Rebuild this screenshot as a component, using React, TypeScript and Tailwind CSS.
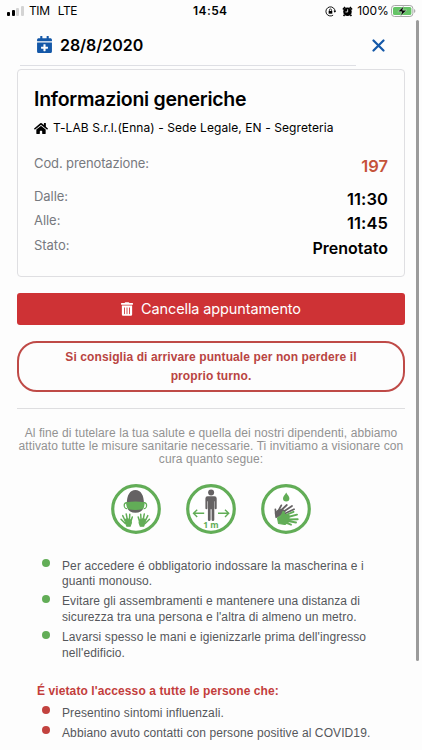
import { FaCalendarPlus, FaHome, FaTrashAlt } from "react-icons/fa";

const details = [
  { label: "Dalle:", value: "11:30", valueClass: "text-[16.5px] tracking-[0.1px]" },
  { label: "Alle:", value: "11:45", valueClass: "text-[16.5px] tracking-[0.1px]" },
  { label: "Stato:", value: "Prenotato", valueClass: "text-[16px]" },
];

const rules = [
  ["Per accedere é obbligatorio indossare la mascherina e i", "guanti monouso."],
  ["Evitare gli assembramenti e mantenere una distanza di", "sicurezza tra una persona e l'altra di almeno un metro."],
  ["Lavarsi spesso le mani e igienizzarle prima dell'ingresso", "nell'edificio."],
];

const forbidden = [
  "Presentino sintomi influenzali.",
  "Abbiano avuto contatti con persone positive al COVID19.",
];

const StatusBar = () => (
  <div className="flex h-[22px] shrink-0 items-center whitespace-nowrap pl-[7px] pr-[6px] text-black">
    <div className="flex h-[10px] w-[18px] items-end gap-[1.5px]">
      <span className="h-[4px] w-[3px] rounded-[1px] bg-black" />
      <span className="h-[6px] w-[3px] rounded-[1px] bg-black" />
      <span className="h-[8px] w-[3px] rounded-[1px] bg-[#d4d4d4]" />
      <span className="h-[10px] w-[3px] rounded-[1px] bg-[#d4d4d4]" />
    </div>
    <span className="ml-[4px] w-[29px] text-[12px] tracking-[-0.3px]">TIM</span>
    <span className="w-[136px] text-[12px] tracking-[-0.5px]">LTE</span>
    <span className="w-[132px] text-[12px] font-semibold tracking-[0.4px]">14:54</span>
    <svg className="ml-[1px] h-[11px] w-[11px]" viewBox="0 0 12 12" fill="none" stroke="#000" strokeWidth="1">
      <path d="M8.9 10A5 5 0 1 1 11 6.2" />
      <path d="M9.3 5.2h3L10.8 7.5z" fill="#000" stroke="none" />
      <rect x="4" y="5.4" width="4" height="3" fill="#000" stroke="none" />
      <path d="M4.8 5.7V4.4a1.2 1.2 0 0 1 2.4 0v1.3" strokeWidth=".8" />
    </svg>
    <svg className="ml-[6px] h-[11px] w-[11px]" viewBox="0 0 12 12">
      <path d="M1 3.7 3.4 1M8.6 1 11 3.7M2.8 9.5 1.7 11M9.2 9.5l1.1 1.5" stroke="#000" strokeWidth="1.7" />
      <circle cx="6" cy="6.3" r="4.7" />
      <path d="M6.2 3.6v2.9H3.8" fill="none" stroke="#fff" strokeWidth=".9" />
    </svg>
    <span className="ml-[4px] w-[34px] text-[12px] tracking-[-0.1px]">100%</span>
    <svg className="h-[12px] w-[25px]" viewBox="0 0 25 12">
      <rect x=".5" y=".5" width="21.5" height="11" rx="3" fill="#fff" stroke="#a5a5a5" />
      <rect x="2" y="2" width="18.5" height="8" rx="1.6" fill="#65c466" />
      <path d="M23.2 4v4q1.3-.6 1.3-2t-1.3-2z" fill="#aaa" />
      <path d="M12.8 1 6.9 6.7h3.9L9.6 11l6.1-5.8h-4z" fill="#000" stroke="#e5f6e5" strokeWidth=".5" />
    </svg>
  </div>
);

const OpenHand = () => (
  <g fill="none" stroke="#62ad57" strokeLinecap="round" strokeLinejoin="round">
    <path d="M13.8 36 11.7 31.6M16.2 35 15.2 29.9M18.5 35 18.8 30.2M20.1 36.8 21.3 33" strokeWidth="1.5" />
    <path d="M13.6 35.6 16.5 34.8 20 36 20.4 38.8 19.2 42.2H15.7z" fill="#62ad57" strokeWidth="1.1" />
    <path d="M14.3 39.5 10 35.2" strokeWidth="1.5" />
  </g>
);

const Ring = () => <circle cx="25" cy="25" r="23.3" fill="#fff" stroke="#62ad57" strokeWidth="3.2" />;

const MaskIcon = () => (
  <svg className="h-[50px] w-[50px]" viewBox="0 0 50 50">
    <Ring />
    <path d="M15.8 20C15.8 11 19 6 24.4 6S33 11 33 20q0 8.8-8.6 8.8-8.6 0-8.6-8.8z" fill="#656263" />
    <path d="M16.5 18.7h-1.2a2.6 3 0 0 0 1 5.9M32.3 18.7h1.2a2.6 3 0 0 1-1 5.9" fill="none" stroke="#62ad57" strokeWidth="1.2" />
    <path d="M15.4 18.2q9-1.2 18 0 .9 4.2-2 7.1-7 1.6-14 0-2.9-2.9-2-7.1z" fill="#62ad57" />
    <OpenHand />
    <g transform="matrix(-1 0 0 1 48.5 0)">
      <OpenHand />
    </g>
  </svg>
);

const DistanceIcon = () => (
  <svg className="h-[50px] w-[50px]" viewBox="0 0 50 50">
    <Ring />
    <circle cx="25.1" cy="8.5" r="3" fill="#656263" />
    <path
      d="M21.8 12.3h6.6a2.3 2.3 0 0 1 2.3 2.3v9.6a1 1 0 0 1-2 0v-7h-.4v18.5a1.2 1.2 0 0 1-2.7 0V25.3h-1v10.4a1.2 1.2 0 0 1-2.7 0V17.2h-.5v7a1 1 0 0 1-2 0v-9.6a2.3 2.3 0 0 1 2.4-2.3z"
      fill="#656263"
    />
    <path d="M18.2 29.3H7.5M11.2 25.7l-3.7 3.6 3.7 3.6M32 29.3h10.5M39 25.7l3.7 3.6-3.7 3.6" fill="none" stroke="#62ad57" strokeWidth="1.4" />
    <text x="25" y="44" textAnchor="middle" fill="#62ad57" className="font-['Open_Sans'] text-[8.5px] font-bold">
      1 m
    </text>
  </svg>
);

const WashIcon = () => (
  <svg className="h-[50px] w-[50px]" viewBox="0 0 50 50">
    <Ring />
    <path d="M25.2 8.5c1.2 2.4 3.2 3.8 3.2 5.8a3.2 3.2 0 0 1-6.4 0c0-2 2-3.4 3.2-5.8z" fill="#62ad57" />
    <g fill="none" stroke="#656263" strokeLinecap="round" strokeLinejoin="round">
      <path d="M17 27.5 20.3 21.4M20 26.5 25.8 21M22 28l9-6M24 29.5l9-4.2M14.8 29l-.4-3.5" strokeWidth="1.8" />
      <path d="M14.3 29 17 26.5l4-1.2 3 2-3.5 3.5-5.5 2.7z" fill="#656263" strokeWidth="1.2" />
    </g>
    <g fill="none" stroke="#62ad57" strokeLinecap="round" strokeLinejoin="round">
      <path d="M25 31 32.5 27.8M27 33l9-2.4M27 35.5l9.7-.2M27 37l8 1.5M24 38.3l6 2.4" strokeWidth="1.9" />
      <path d="M16.5 34q4.4-2 5.6-6.8 1.8.4 1.1 3.2l4.8.6v6.5L24 40.5 17.5 39.5z" fill="#62ad57" strokeWidth="1.1" />
    </g>
  </svg>
);

const App = () => {
  return (
    <div className="relative flex h-[750px] w-[422px] flex-col overflow-hidden bg-[#fdfdfd] font-['Inter',sans-serif]">
      <StatusBar />

      <header className="flex h-[43px] shrink-0 items-center justify-between pl-[37px] pr-[37px] pt-[2px]">
        <div className="flex items-center gap-[8px]">
          <FaCalendarPlus className="h-[17px] w-[15px] text-[#1458a8]" />
          <span className="h-[20px] whitespace-nowrap text-[16px] font-semibold leading-[20px] tracking-[-0.05px] text-black">28/8/2020</span>
        </div>
        <svg className="mt-[2px] h-[13px] w-[13px]" viewBox="0 0 13 13" stroke="#1458a8" strokeWidth="2.2" strokeLinecap="round">
          <path d="M1.5 1.5l10 10M11.5 1.5l-10 10" />
        </svg>
      </header>
      <div className="ml-[20px] h-px w-[336px] shrink-0 bg-[#dedfe4]" />

      <main className="ml-[17px] mt-[3px] flex w-[388px] flex-col">
        <section className="h-[208px] rounded-[4px] border border-[#dfdfe2] px-[16px] pt-[15px] text-black">
          <h1 className="h-[28px] whitespace-nowrap text-[19.5px] font-semibold leading-[28px] tracking-[-0.26px]">Informazioni generiche</h1>
          <div className="mt-[5px] flex h-[20px] items-center gap-[5px]">
            <FaHome className="h-[13px] w-[14px]" />
            <span className="whitespace-nowrap text-[12px] tracking-[0.08px]">T-LAB S.r.l.(Enna) - Sede Legale, EN - Segreteria</span>
          </div>
          <div className="mt-[15px] flex h-[34px] justify-between">
            <span className="text-[13px] leading-[20px] tracking-[-0.12px] text-[#77797f]">Cod. prenotazione:</span>
            <span className="text-[16.5px] font-semibold leading-[27px] text-[#c5533a]">197</span>
          </div>
          {details.map((item) => (
            <div key={item.label} className="flex h-[24.4px] justify-between">
              <span className="text-[13px] leading-[18px] tracking-[-0.05px] text-[#77797f]">{item.label}</span>
              <span className={`font-semibold leading-[24px] ${item.valueClass}`}>{item.value}</span>
            </div>
          ))}
        </section>

        <button className="mt-[16px] flex h-[32px] items-center justify-center gap-[8px] rounded-[3px] bg-[#ce3235] text-white">
          <FaTrashAlt className="h-[14px] w-[12px]" />
          <span className="whitespace-nowrap text-[14.5px] tracking-[-0.12px]">Cancella appuntamento</span>
        </button>

        <div className="mt-[16px] flex h-[51px] flex-col items-center justify-center rounded-[20px] border-2 border-[#bf4a47] font-['Liberation_Sans',sans-serif] text-[12px] font-bold leading-[18.5px] tracking-[0.1px] text-[#b94442]">
          <span className="whitespace-nowrap">Si consiglia di arrivare puntuale per non perdere il</span>
          <span className="whitespace-nowrap">proprio turno.</span>
        </div>

        <hr className="mt-[16px] border-[#dedee0]" />

        <div className="mt-[18px] flex flex-col items-center font-['Liberation_Sans',sans-serif] text-[12px] leading-[13.2px] tracking-[0.088px] text-[#929292]">
          <span className="whitespace-nowrap">Al fine di tutelare la tua salute e quella dei nostri dipendenti, abbiamo</span>
          <span className="whitespace-nowrap">attivato tutte le misure sanitarie necessarie. Ti invitiamo a visionare con</span>
          <span className="whitespace-nowrap">cura quanto segue:</span>
        </div>

        <div className="mt-[17px] flex justify-center gap-[25px]">
          <MaskIcon />
          <DistanceIcon />
          <WashIcon />
        </div>

        <div className="ml-[20px] mt-[25px] font-['Liberation_Sans',sans-serif] text-[12px] tracking-[0.1px] text-[#55575b]">
          <ul className="flex flex-col gap-[5px] leading-[15.4px]">
            {rules.map(([first, second]) => (
              <li key={first} className="flex">
                <span className="ml-[4.5px] mt-[0.5px] h-[8px] w-[8px] rounded-full bg-[#62ad57]" />
                <p className="ml-[12.5px] whitespace-nowrap">
                  {first}
                  <br />
                  {second}
                </p>
              </li>
            ))}
          </ul>
          <h2 className="mt-[22px] whitespace-nowrap font-bold leading-[16px] text-[#c33d3c]">É vietato l'accesso a tutte le persone che:</h2>
          <ul className="mt-[7px] flex flex-col gap-[5px] leading-[15.4px]">
            {forbidden.map((item) => (
              <li key={item} className="flex">
                <span className="ml-[4.5px] h-[8px] w-[8px] rounded-full bg-[#c2423f]" />
                <p className="ml-[12.5px] whitespace-nowrap">{item}</p>
              </li>
            ))}
          </ul>
        </div>
      </main>

      {/* page scroll thumb */}
      <div className="absolute right-[3px] top-[20px] h-[641px] w-[3px] rounded-full bg-[#9b9b9b]" />
    </div>
  );
};

export default App;
